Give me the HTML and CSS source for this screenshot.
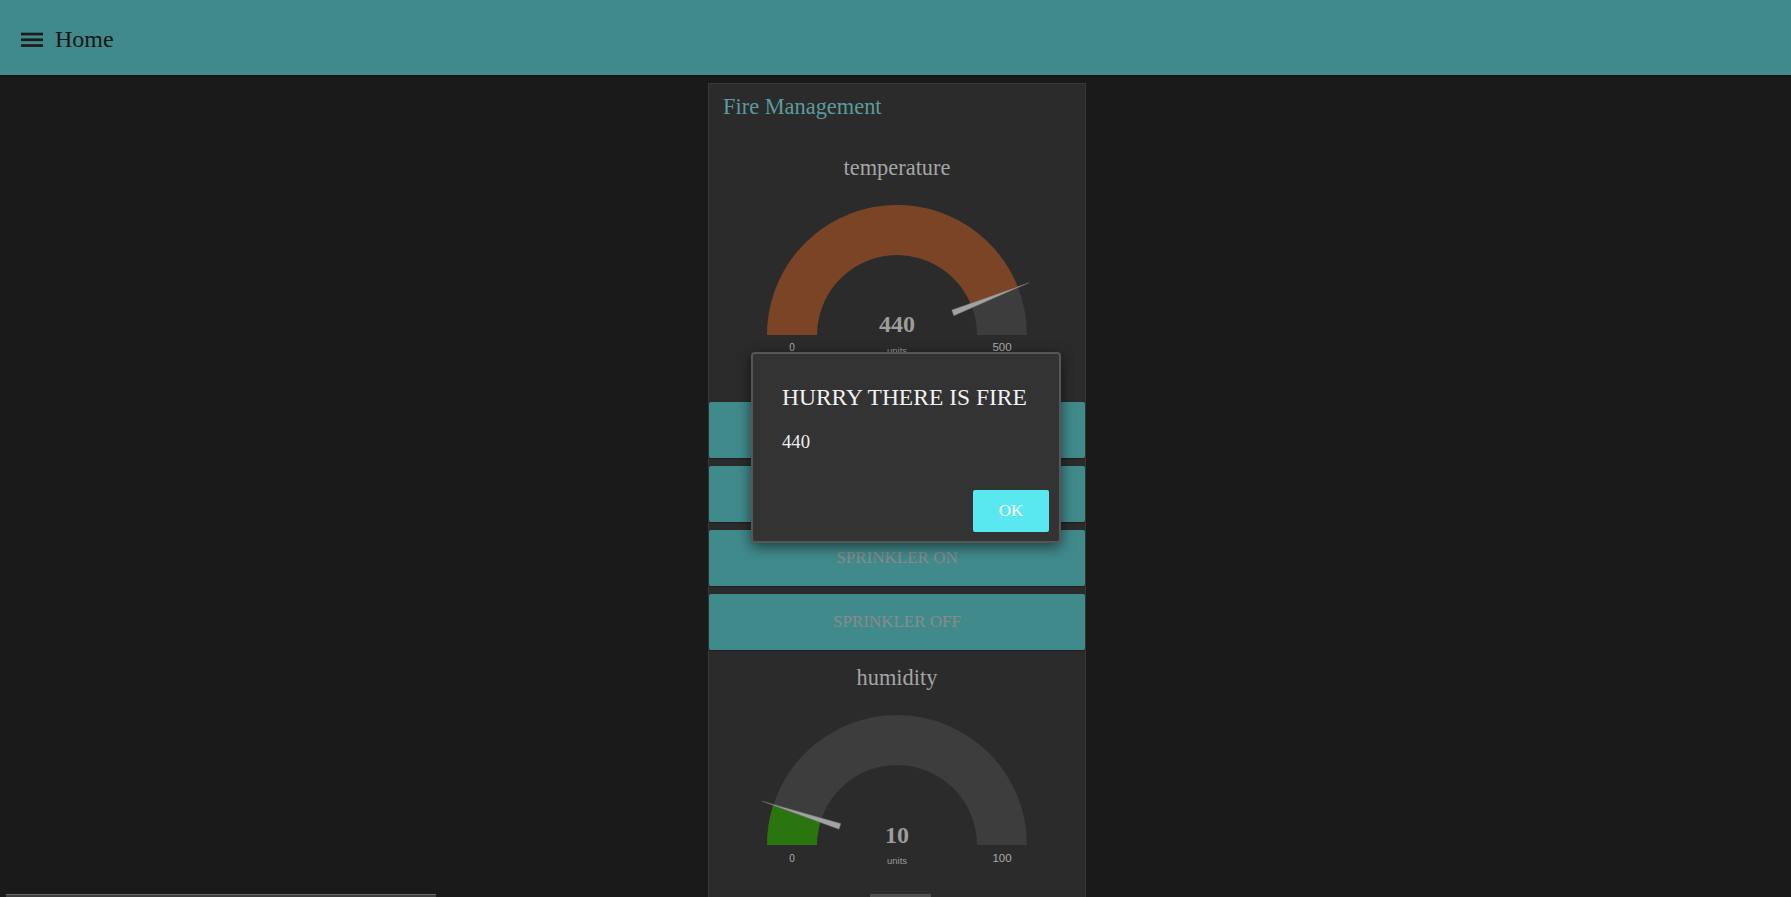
FILE: index.html
```html
<!DOCTYPE html>
<html lang="en">
<head>
<meta charset="utf-8">
<title>Home</title>
<link rel="stylesheet" href="styles.css">
</head>
<body>
<header class="topbar">
  <svg class="menu-icon" width="22" height="22" viewBox="0 0 22 22" aria-hidden="true">
    <rect x="0" y="5.7" width="22" height="2.7"/>
    <rect x="0" y="11.4" width="22" height="2.7"/>
    <rect x="0" y="17.2" width="22" height="2.7"/>
  </svg>
  <span class="page-title">Home</span>
</header>

<main class="content">
  <section class="card">
    <div class="card-title">Fire Management</div>

    <div class="gauge">
      <div class="gauge-title">temperature</div>
      <svg class="gauge-svg" width="376" height="222" viewBox="0 0 376 222">
        <g transform="translate(0,-1)">
          <path class="track" d="M58 156 A130 130 0 0 1 318 156 L268 156 A80 80 0 0 0 108 156 Z"/>
          <path class="fill-hot" d="M58 156 A130 130 0 0 1 308.87 108.14 L262.38 126.55 A80 80 0 0 0 108 156 Z"/>
          <polygon class="needle" points="244.89,136.70 242.69,131.12 320.03,103.73"/>
          <text class="g-value" x="188" y="153">440</text>
          <text class="g-unit" x="188" y="175">units</text>
          <text class="g-min" x="83" y="172">0</text>
          <text class="g-max" x="293" y="172">500</text>
        </g>
      </svg>
    </div>

    <div class="buttons">
      <button class="btn">FIRE ALARM ON</button>
      <button class="btn">FIRE ALARM OFF</button>
      <button class="btn">SPRINKLER ON</button>
      <button class="btn">SPRINKLER OFF</button>
    </div>

    <div class="gauge gauge-next">
      <div class="gauge-title">humidity</div>
      <svg class="gauge-svg" width="376" height="222" viewBox="0 0 376 222">
        <g transform="translate(0,-1)">
          <path class="track" d="M58 156 A130 130 0 0 1 318 156 L268 156 A80 80 0 0 0 108 156 Z"/>
          <path class="fill-ok" d="M58 156 A130 130 0 0 1 64.36 115.83 L111.92 131.28 A80 80 0 0 0 108 156 Z"/>
          <polygon class="needle" points="131.87,134.61 130.01,140.31 52.95,112.12"/>
          <text class="g-value" x="188" y="154">10</text>
          <text class="g-unit" x="188" y="175">units</text>
          <text class="g-min" x="83" y="173">0</text>
          <text class="g-max" x="293" y="173">100</text>
        </g>
      </svg>
    </div>
  </section>
</main>

<div class="dialog" role="alertdialog">
  <div class="dialog-body">
    <h2 class="dialog-title">HURRY THERE IS FIRE</h2>
    <div class="dialog-text">440</div>
  </div>
  <div class="dialog-actions">
    <button class="ok-btn">OK</button>
  </div>
</div>

<div class="scroll-page"></div>
<div class="scroll-card"></div>
</body>
</html>
```

FILE: styles.css
```css
html, body {
  margin: 0;
  height: 100%;
  overflow: hidden;
}

body {
  background: #1a1a1a;
  font-family: "Liberation Serif", "Times New Roman", serif;
  position: relative;
}

.topbar {
  height: 75px;
  background: #418a8c;
  display: flex;
  align-items: center;
  padding-left: 21px;
  box-shadow: 0 1px 2px rgba(0, 0, 0, 0.45);
  position: relative;
  z-index: 1;
}

.menu-icon {
  display: block;
  fill: #1c1c1c;
  margin-right: 12px;
}

.page-title {
  font-size: 24px;
  line-height: 28px;
  padding-top: 2px;
  color: #161616;
}

.content {
  display: flex;
  justify-content: center;
  padding-top: 8px;
  padding-left: 3px;
}

.card {
  width: 376px;
  border: 1px solid #383838;
  background: #2b2b2b;
}

.card-title {
  font-size: 22.4px;
  line-height: 24px;
  color: #5b9b9d;
  padding: 11px 14px 0;
}

.gauge-title {
  font-size: 22.4px;
  line-height: 25px;
  padding-top: 1px;
  text-align: center;
  color: #a5a5a5;
  margin-top: 35px;
}

.gauge-next .gauge-title {
  margin-top: 14px;
}

.gauge-svg {
  display: block;
}

.track {
  fill: #3d3d3d;
}

.fill-hot {
  fill: #7b4427;
}

.fill-ok {
  fill: #2b7511;
}

.needle {
  fill: #a3a3a3;
  stroke: #6a6a6a;
  stroke-width: 0.5;
}

.g-value {
  font-family: "Liberation Serif", serif;
  font-weight: bold;
  font-size: 24px;
  fill: #9d9d9d;
  text-anchor: middle;
}

.g-unit {
  font-family: "Liberation Sans", Arial, sans-serif;
  font-size: 9.5px;
  fill: #9a9a9a;
  text-anchor: middle;
}

.g-min {
  font-family: "Liberation Sans", Arial, sans-serif;
  font-size: 10px;
  fill: #acacac;
  text-anchor: middle;
}

.g-max {
  font-family: "Liberation Sans", Arial, sans-serif;
  font-size: 11.5px;
  fill: #acacac;
  text-anchor: middle;
}

.buttons {
  display: flex;
  flex-direction: column;
  gap: 8px;
}

.btn {
  height: 56px;
  width: 100%;
  background: #418a8c;
  border: 0;
  border-radius: 2px;
  color: #8b8b8b;
  font-family: "Liberation Serif", serif;
  font-size: 17px;
  box-shadow: 0 1px 2px rgba(0, 0, 0, 0.35);
  padding: 0;
}

.dialog {
  position: absolute;
  left: 751px;
  top: 352px;
  width: 310px;
  height: 191px;
  box-sizing: border-box;
  border: 2px solid #565656;
  border-radius: 4px;
  background: #333333;
  box-shadow: 0 4px 14px rgba(0, 0, 0, 0.55);
  z-index: 5;
}

.dialog-body {
  padding: 30px 29px 0;
}

.dialog-title {
  margin: 0;
  font-weight: normal;
  font-size: 23.5px;
  line-height: 27px;
  color: #f2f2f2;
}

.dialog-text {
  margin-top: 20px;
  font-size: 18.7px;
  line-height: 22px;
  color: #efefef;
}

.dialog-actions {
  display: flex;
  justify-content: flex-end;
  margin-top: 37px;
  padding-right: 10px;
}

.ok-btn {
  width: 76px;
  height: 42px;
  background: #5ae8f0;
  border: 0;
  border-radius: 2px;
  color: #ffffff;
  font-family: "Liberation Serif", serif;
  font-size: 17px;
  padding: 0;
}

.scroll-page {
  position: absolute;
  left: 6px;
  bottom: 0;
  width: 430px;
  height: 2px;
  background: #3e3e3e;
  border-top: 1px solid #6a6a6a;
}

.scroll-card {
  position: absolute;
  left: 870px;
  bottom: 0;
  width: 61px;
  height: 3px;
  background: #4e4e4e;
}
```
